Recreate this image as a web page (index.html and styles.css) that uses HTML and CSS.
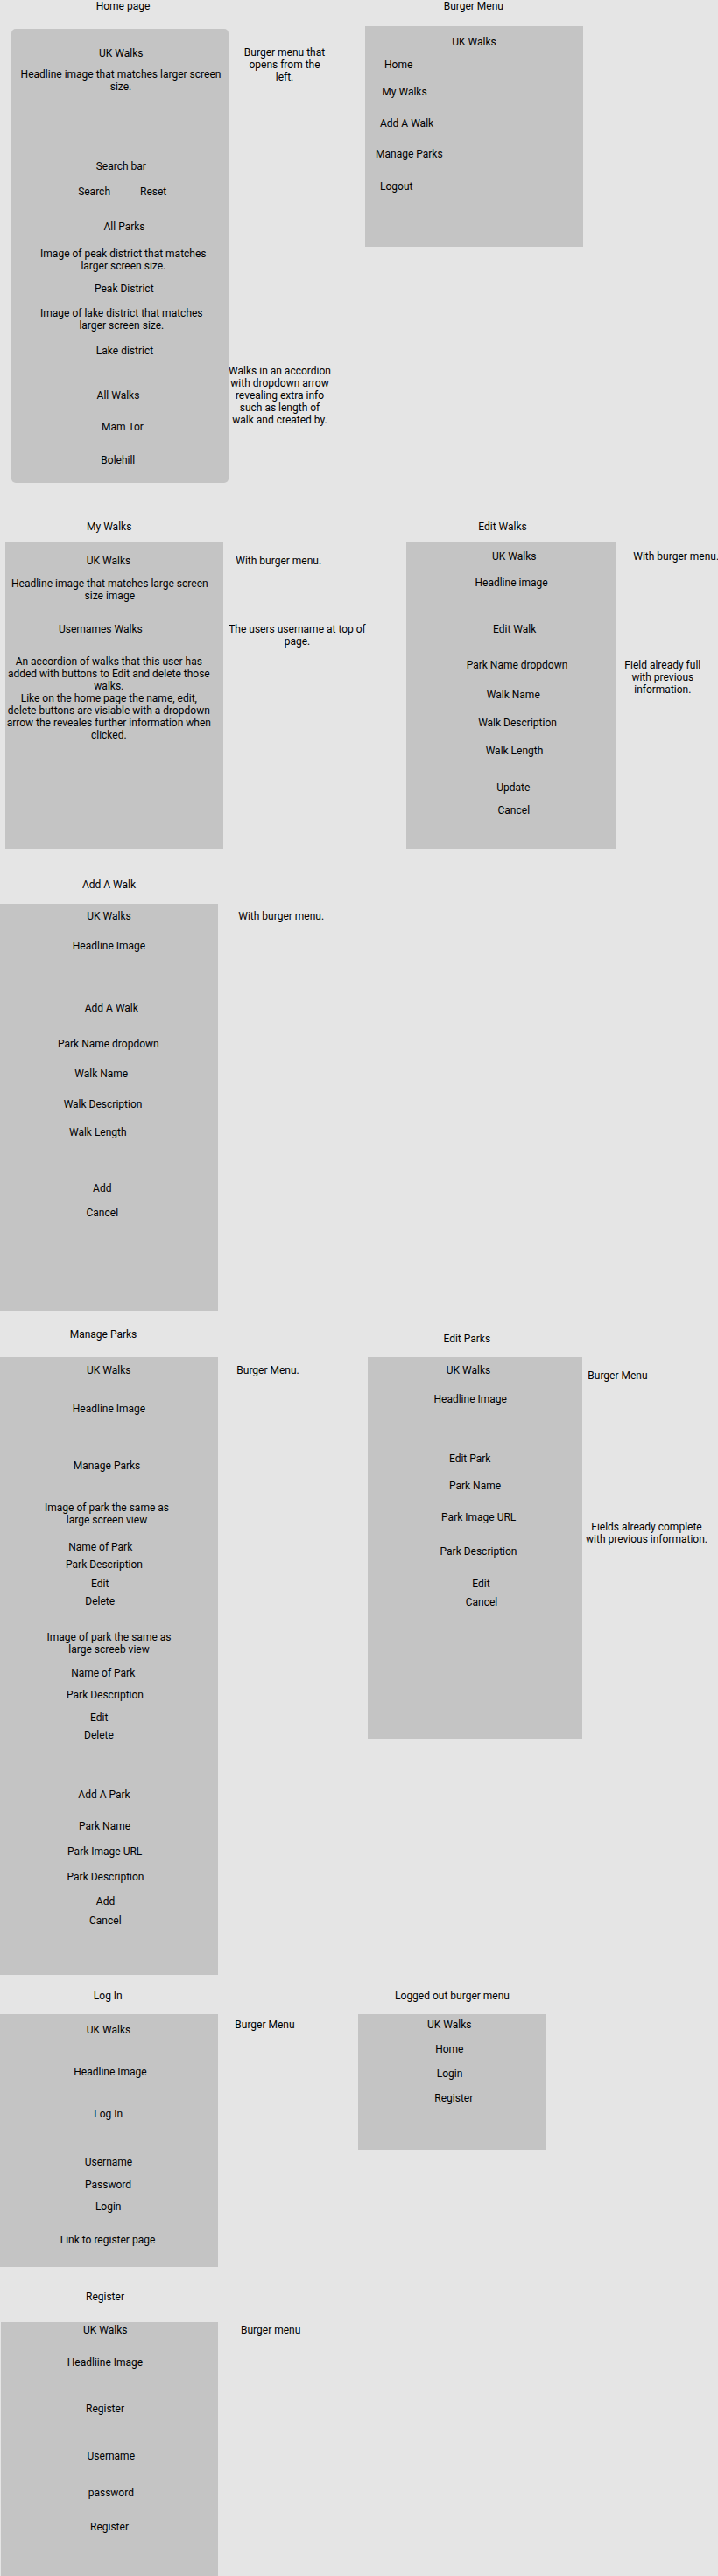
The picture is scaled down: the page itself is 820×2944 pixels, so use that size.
FILE: index.html
```html
<!DOCTYPE html>
<html lang="en">
<head>
<meta charset="utf-8">
<title>UK Walks – mobile wireframes</title>
<link rel="stylesheet" href="styles.css">
</head>
<body>
<main class="canvas">
  <!-- Board titles -->
  <div class="title t-home">Home page</div>
  <div class="title t-burger">Burger Menu</div>
  <div class="title t-mywalks">My Walks</div>
  <div class="title t-editwalks">Edit Walks</div>
  <div class="title t-addwalk">Add A Walk</div>
  <div class="title t-manage">Manage Parks</div>
  <div class="title t-editparks">Edit Parks</div>
  <div class="title t-login">Log In</div>
  <div class="title t-loggedout">Logged out burger menu</div>
  <div class="title t-register">Register</div>

  <!-- Home page -->
  <section class="frame f-home">
    <div class="h1">UK Walks</div>
    <div class="h2">Headline image that matches larger screen<br>size.</div>
    <div class="h3">Search bar</div>
    <div class="h4"><span>Search</span><span>Reset</span></div>
    <div class="h5">All Parks</div>
    <div class="h6">Image of peak district that matches<br>larger screen size.</div>
    <div class="h7">Peak District</div>
    <div class="h8">Image of lake district that matches<br>larger screen size.</div>
    <div class="h9">Lake district</div>
    <div class="h10">All Walks</div>
    <div class="h11">Mam Tor</div>
    <div class="h12">Bolehill</div>
  </section>

  <!-- Burger menu -->
  <section class="frame f-burger">
    <div class="b1">UK Walks</div>
    <div class="b2">Home</div>
    <div class="b3">My Walks</div>
    <div class="b4">Add A Walk</div>
    <div class="b5">Manage Parks</div>
    <div class="b6">Logout</div>
  </section>

  <!-- My walks -->
  <section class="frame f-mywalks">
    <div class="m1">UK Walks</div>
    <div class="m2">Headline image that matches large screen<br>size image</div>
    <div class="m3">Usernames Walks</div>
    <div class="m4">An accordion of walks that this user has<br>added with buttons to Edit and delete those<br>walks.<br>Like on the home page the name, edit,<br>delete buttons are visiable with a dropdown<br>arrow the reveales further information when<br>clicked.</div>
  </section>

  <!-- Edit walks -->
  <section class="frame f-editwalks">
    <div class="e1">UK Walks</div>
    <div class="e2">Headline image</div>
    <div class="e3">Edit Walk</div>
    <div class="e4">Park Name dropdown</div>
    <div class="e5">Walk Name</div>
    <div class="e6">Walk Description</div>
    <div class="e7">Walk Length</div>
    <div class="e8">Update</div>
    <div class="e9">Cancel</div>
  </section>

  <!-- Add a walk -->
  <section class="frame f-addwalk">
    <div class="a1">UK Walks</div>
    <div class="a2">Headline Image</div>
    <div class="a3">Add A Walk</div>
    <div class="a4">Park Name dropdown</div>
    <div class="a5">Walk Name</div>
    <div class="a6">Walk Description</div>
    <div class="a7">Walk Length</div>
    <div class="a8">Add</div>
    <div class="a9">Cancel</div>
  </section>

  <!-- Manage parks -->
  <section class="frame f-manage">
    <div class="p1">UK Walks</div>
    <div class="p2">Headline Image</div>
    <div class="p3">Manage Parks</div>
    <div class="p4">Image of park the same as<br>large screen view</div>
    <div class="p5">Name of Park</div>
    <div class="p6">Park Description</div>
    <div class="p7">Edit</div>
    <div class="p8">Delete</div>
    <div class="p9">Image of park the same as<br>large screeb view</div>
    <div class="p10">Name of Park</div>
    <div class="p11">Park Description</div>
    <div class="p12">Edit</div>
    <div class="p13">Delete</div>
    <div class="p14">Add A Park</div>
    <div class="p15">Park Name</div>
    <div class="p16">Park Image URL</div>
    <div class="p17">Park Description</div>
    <div class="p18">Add</div>
    <div class="p19">Cancel</div>
  </section>

  <!-- Edit parks -->
  <section class="frame f-editparks">
    <div class="q1">UK Walks</div>
    <div class="q2">Headline Image</div>
    <div class="q3">Edit Park</div>
    <div class="q4">Park Name</div>
    <div class="q5">Park Image URL</div>
    <div class="q6">Park Description</div>
    <div class="q7">Edit</div>
    <div class="q8">Cancel</div>
  </section>

  <!-- Log in -->
  <section class="frame f-login">
    <div class="l1">UK Walks</div>
    <div class="l2">Headline Image</div>
    <div class="l3">Log In</div>
    <div class="l4">Username</div>
    <div class="l5">Password</div>
    <div class="l6">Login</div>
    <div class="l7">Link to register page</div>
  </section>

  <!-- Logged out burger menu -->
  <section class="frame f-loggedout">
    <div class="o1">UK Walks</div>
    <div class="o2">Home</div>
    <div class="o3">Login</div>
    <div class="o4">Register</div>
  </section>

  <!-- Register -->
  <section class="frame f-register">
    <div class="r1">UK Walks</div>
    <div class="r2">Headliine Image</div>
    <div class="r3">Register</div>
    <div class="r4">Username</div>
    <div class="r5">password</div>
    <div class="r6">Register</div>
  </section>

  <!-- Annotations -->
  <div class="note center n-burger">Burger menu that<br>opens from the<br>left.</div>
  <div class="note center n-accordion">Walks in an accordion<br>with dropdown arrow<br>revealing extra info<br>such as length of<br>walk and created by.</div>
  <div class="note n-with1">With burger menu.</div>
  <div class="note center n-username">The users username at top of<br>page.</div>
  <div class="note n-with2">With burger menu.</div>
  <div class="note center n-field">Field already full<br>with previous<br>information.</div>
  <div class="note n-with3">With burger menu.</div>
  <div class="note n-bm1">Burger Menu.</div>
  <div class="note n-bm2">Burger Menu</div>
  <div class="note center n-fields">Fields already complete<br>with previous information.</div>
  <div class="note n-bm3">Burger Menu</div>
  <div class="note n-bm4">Burger menu</div>
</main>
</body>
</html>
```

FILE: styles.css
```css
html, body {
  margin: 0;
  padding: 0;
  background: #e5e5e5;
}

body {
  font-family: Roboto, "Liberation Sans", Arial, sans-serif;
  font-size: 12px;
  line-height: 14px;
  color: #000;
}

/* Free design canvas holding the artboards */
.canvas {
  position: relative;
  width: 820px;
  height: 2944px;
  overflow: hidden;
}

.title,
.note {
  position: absolute;
  white-space: nowrap;
}

.title,
.note.center {
  width: 200px;
  text-align: center;
}

/* Board titles */
.t-home      { left: 40.5px;  top: 0; }
.t-burger    { left: 440.8px; top: 0; }
.t-mywalks   { left: 24.7px;  top: 594.9px; }
.t-editwalks { left: 474px;   top: 594.9px; }
.t-addwalk   { left: 24.5px;  top: 1003.6px; }
.t-manage    { left: 18px;    top: 1517.9px; }
.t-editparks { left: 433.3px; top: 1522.5px; }
.t-login     { left: 23.3px;  top: 2273.9px; }
.t-loggedout { left: 416.5px; top: 2273.9px; }
.t-register  { left: 20px;    top: 2617.6px; }

/* Annotations */
.n-burger    { left: 225px;   top: 52.8px; }
.n-accordion { left: 219.5px; top: 416.8px; }
.n-with1     { left: 269.3px; top: 633.6px; }
.n-username  { left: 239.5px; top: 711.6px; }
.n-with2     { left: 723.3px; top: 628.9px; }
.n-field     { left: 656.8px; top: 752.9px; }
.n-with3     { left: 272.3px; top: 1039.6px; }
.n-bm1       { left: 270.3px; top: 1558.9px; }
.n-bm2       { left: 671.3px; top: 1565.3px; }
.n-fields    { left: 638.5px; top: 1738.3px; }
.n-bm3       { left: 268.3px; top: 2306.6px; }
.n-bm4       { left: 275px;   top: 2655.6px; }

/* Artboards (phone frames) */
.frame {
  position: absolute;
  display: flex;
  flex-direction: column;
  background: #c4c4c4;
  text-align: center;
  white-space: nowrap;
  box-sizing: border-box;
}

.f-home      { left: 13px;  top: 32.9px;   width: 248px; height: 519px; border-radius: 5px; }
.f-burger    { left: 417px; top: 30px;     width: 249px; height: 252px; }
.f-mywalks   { left: 6px;   top: 620px;    width: 249px; height: 350px; }
.f-editwalks { left: 464px; top: 620px;    width: 240px; height: 350px; }
.f-addwalk   { left: 0;     top: 1033px;   width: 249px; height: 465px; }
.f-manage    { left: 0;     top: 1551.2px; width: 249px; height: 705.5px; }
.f-editparks { left: 420px; top: 1551.2px; width: 245px; height: 436px; }
.f-login     { left: 0;     top: 2302px;   width: 249px; height: 289px; }
.f-loggedout { left: 409px; top: 2302px;   width: 215px; height: 155px; }
.f-register  { left: 1px;   top: 2654px;   width: 248px; height: 300px; }

/* Home page */
.h1  { margin-top: 21px;   margin-left: 2.6px; }
.h2  { margin-top: 10.3px; margin-left: 2px; }
.h3  { margin-top: 77.3px; margin-left: 2.6px; }
.h4  { margin-top: 14.1px; margin-left: 5.4px; display: flex; justify-content: center; gap: 34px; }
.h5  { margin-top: 26.5px; margin-left: 10px; }
.h6  { margin-top: 16.7px; margin-left: 7.6px; }
.h7  { margin-top: 12px;   margin-left: 9.6px; }
.h8  { margin-top: 14.2px; margin-left: 3.6px; }
.h9  { margin-top: 14.9px; margin-left: 11px; }
.h10 { margin-top: 37.1px; margin-left: -4px; }
.h11 { margin-top: 22px;   margin-left: 6px; }
.h12 { margin-top: 23.9px; margin-left: -4.4px; }

/* Burger menu */
.b1 { margin-top: 11px; }
.b2, .b3, .b4, .b5, .b6 { text-align: left; }
.b2 { margin-top: 11.8px; padding-left: 22px; }
.b3 { margin-top: 17px;   padding-left: 19.3px; }
.b4 { margin-top: 22.1px; padding-left: 17px; }
.b5 { margin-top: 21px;   padding-left: 12px; }
.b6 { margin-top: 23.1px; padding-left: 17px; }

/* My walks */
.m1 { margin-top: 13.6px; margin-left: -13px; }
.m2 { margin-top: 12.3px; margin-left: -10.4px; }
.m3 { margin-top: 23.7px; margin-left: -31.4px; }
.m4 { margin-top: 23px;   margin-left: -12.4px; }

/* Edit walks */
.e1 { margin-top: 8.9px;  margin-left: 6.6px; }
.e2 { margin-top: 16px; }
.e3 { margin-top: 38.7px; margin-left: 7.4px; }
.e4 { margin-top: 27.3px; margin-left: 13px; }
.e5 { margin-top: 19.7px; margin-left: 4.6px; }
.e6 { margin-top: 18.3px; margin-left: 14px; }
.e7 { margin-top: 17.7px; margin-left: 7px; }
.e8 { margin-top: 28px;   margin-left: 4.6px; }
.e9 { margin-top: 12.3px; margin-left: 5.6px; }

/* Add a walk */
.a1 { margin-top: 6.6px; }
.a2 { margin-top: 20px; }
.a3 { margin-top: 57px; margin-left: 5.6px; }
.a4 { margin-top: 27px; margin-left: -1.4px; }
.a5 { margin-top: 20px; margin-left: -17.6px; }
.a6 { margin-top: 21px; margin-left: -14px; }
.a7 { margin-top: 18px; margin-left: -25.4px; }
.a8 { margin-top: 50px; margin-left: -15.4px; }
.a9 { margin-top: 14px; margin-left: -15.4px; }

/* Manage parks */
.p1  { margin-top: 7.7px;  margin-left: -0.4px; }
.p2  { margin-top: 29.9px; }
.p3  { margin-top: 51.1px; margin-left: -5px; }
.p4  { margin-top: 34.2px; margin-left: -5px; }
.p5  { margin-top: 16.8px; margin-left: -19.6px; }
.p6  { margin-top: 6.3px;  margin-left: -11px; }
.p7  { margin-top: 7.8px;  margin-left: -20.6px; }
.p8  { margin-top: 6.3px;  margin-left: -20.6px; }
.p9  { margin-top: 26.9px; }
.p10 { margin-top: 12.6px; margin-left: -13.6px; }
.p11 { margin-top: 11.3px; margin-left: -9px; }
.p12 { margin-top: 12px;   margin-left: -22.6px; }
.p13 { margin-top: 5.9px;  margin-left: -23px; }
.p14 { margin-top: 54.1px; margin-left: -11px; }
.p15 { margin-top: 21.5px; margin-left: -10px; }
.p16 { margin-top: 15px;   margin-left: -9.6px; }
.p17 { margin-top: 15px;   margin-left: -8px; }
.p18 { margin-top: 14px;   margin-left: -8px; }
.p19 { margin-top: 8px;    margin-left: -8.4px; }

/* Edit parks */
.q1 { margin-top: 7.7px;  margin-left: -15px; }
.q2 { margin-top: 19.2px; margin-left: -10.6px; }
.q3 { margin-top: 54.1px; margin-left: -11.6px; }
.q4 { margin-top: 16.7px; }
.q5 { margin-top: 22.3px; margin-left: 8.4px; }
.q6 { margin-top: 25.1px; margin-left: 8px; }
.q7 { margin-top: 22.7px; margin-left: 14px; }
.q8 { margin-top: 7px;    margin-left: 15px; }

/* Log in */
.l1 { margin-top: 10.6px; margin-left: -1px; }
.l2 { margin-top: 34px;   margin-left: 3px; }
.l3 { margin-top: 34.3px; margin-left: -1.6px; }
.l4 { margin-top: 40.7px; margin-left: -1px; }
.l5 { margin-top: 12px;   margin-left: -2px; }
.l6 { margin-top: 11.3px; margin-left: -1.6px; }
.l7 { margin-top: 23.7px; margin-left: -3px; }

/* Logged out burger menu */
.o1 { margin-top: 4.6px; margin-left: -6.4px; }
.o2 { margin-top: 14px;  margin-left: -6.4px; }
.o3 { margin-top: 14px;  margin-left: -6px; }
.o4 { margin-top: 14px;  margin-left: 3.6px; }

/* Register */
.r1 { margin-top: 1.6px; margin-left: -9.4px; }
.r2 { margin-top: 23px;  margin-left: -10px; }
.r3 { margin-top: 39px;  margin-left: -10px; }
.r4 { margin-top: 40px;  margin-left: 3.6px; }
.r5 { margin-top: 28px;  margin-left: 3.6px; }
.r6 { margin-top: 25px; }
```
